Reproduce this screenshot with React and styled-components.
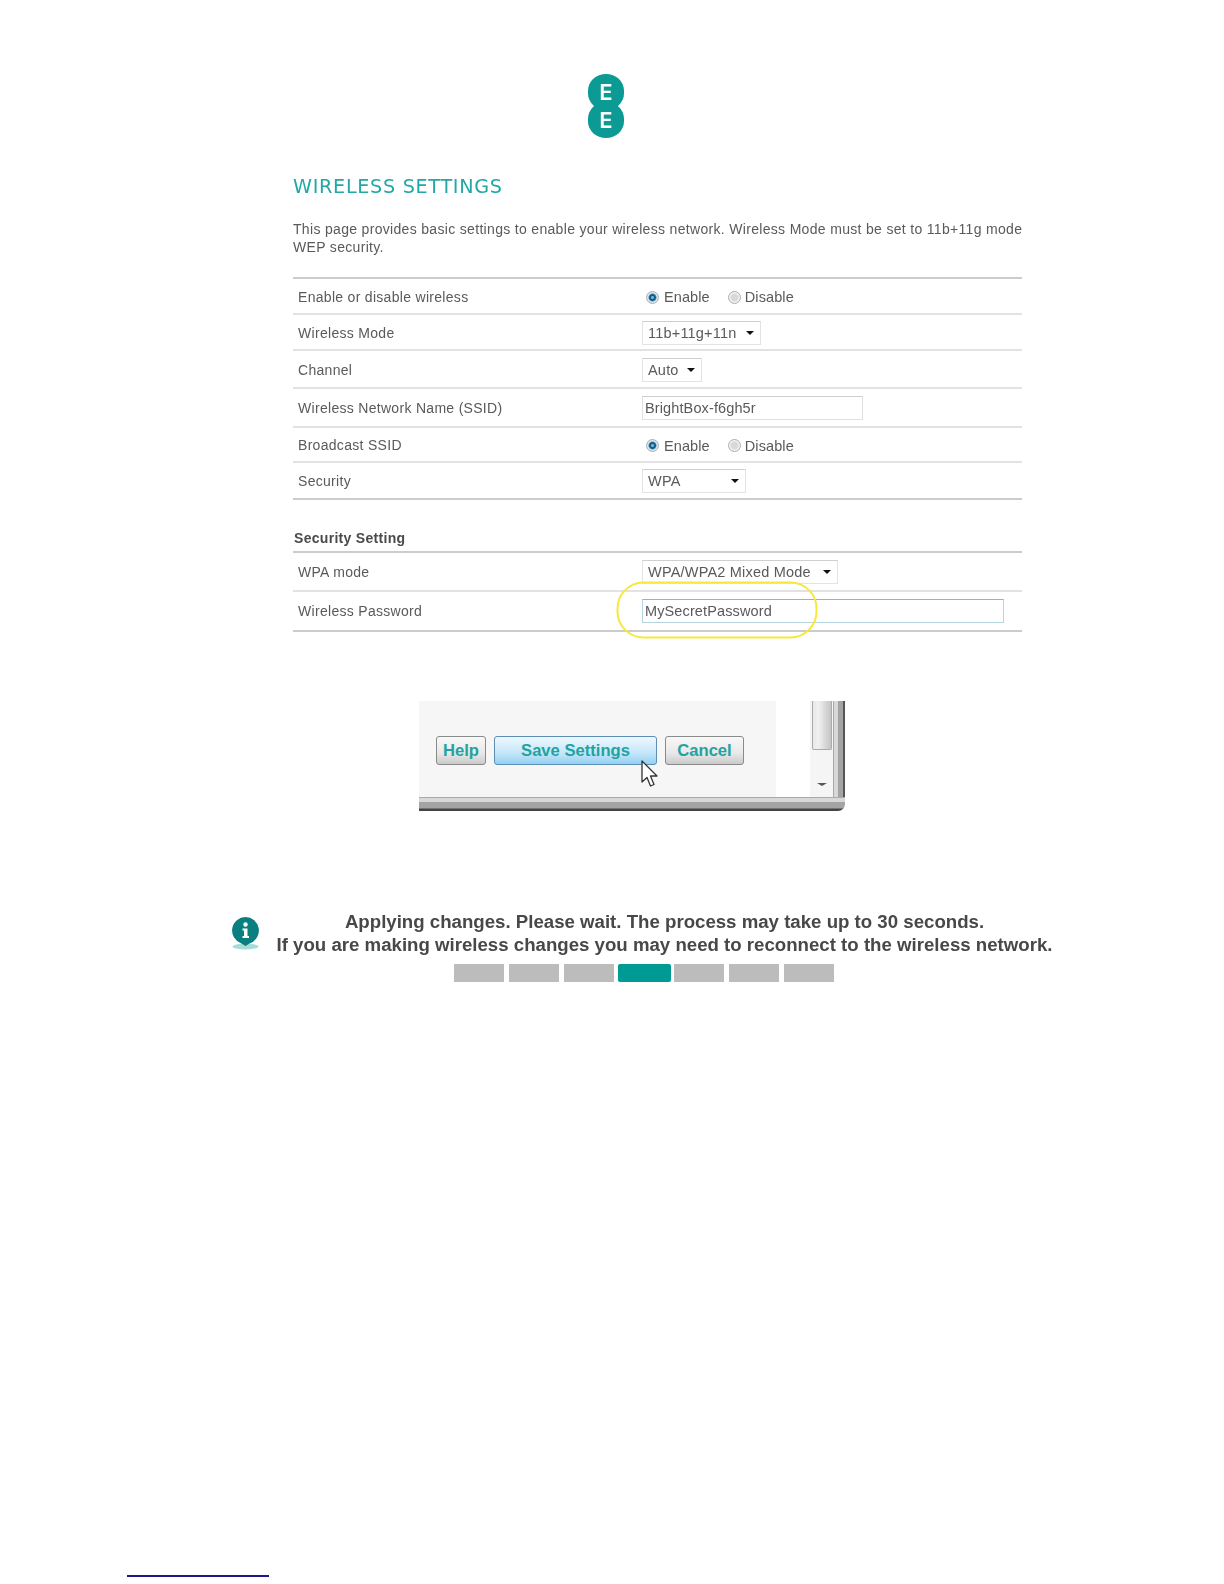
import React from "react";
import styled, { createGlobalStyle } from "styled-components";

const GlobalStyle = createGlobalStyle`
  html, body {
    margin: 0;
    padding: 0;
    background: #fff;
    font-family: "Liberation Sans", Arial, sans-serif;
  }
`;

const Page = styled.div`
  width: 1224px;
  height: 1584px;
  padding-top: 74px;
  box-sizing: border-box;
  overflow: hidden;
  filter: blur(0.35px);
`;

const Logo = styled.div`
  width: 37px;
  height: 64px;
  margin-left: 588px;
`;

const LogoBlob = styled.div`
  width: 36px;
  height: 36px;
  margin-top: ${(p) => (p.$lower ? "-8px" : "0")};
  border-radius: 50% / 46%;
  background: #0b9a94;
  color: #fff;
  font: 600 22px/37px Inter, sans-serif;
  text-align: center;
`;

const Settings = styled.div`
  width: 729px;
  margin-left: 293px;
`;

const Heading = styled.h1`
  margin: 37px 0 0;
  font: 400 19.2px/24px "DejaVu Sans", sans-serif;
  letter-spacing: 0.7px;
  color: #22a8a6;
  white-space: nowrap;
`;

const Intro = styled.p`
  margin: 21px 0 0;
  font-size: 14px;
  line-height: 18px;
  letter-spacing: 0.32px;
  color: #5a5a5a;
  white-space: nowrap;
`;

const Table = styled.div`
  margin-top: ${(p) => p.$top || 0}px;
  border-top: 2px solid #ccc;
`;

const Row = styled.div`
  display: grid;
  grid-template-columns: 349px 1fr;
  align-items: center;
  height: ${(p) => p.$h}px;
  box-sizing: border-box;
  padding-top: ${(p) => (p.$nudge ? 1 : 0)}px;
  border-bottom: 2px solid ${(p) => (p.$last ? "#ccc" : "#e2e2e2")};
  position: relative;
`;

const Label = styled.div`
  padding-left: 5px;
  font-size: 14px;
  letter-spacing: 0.3px;
  color: #5a5a5a;
`;

const Control = styled.div`
  display: flex;
  align-items: center;
`;

const RadioControl = styled(Control)`
  padding-top: 1px;
`;

const RadioDot = styled.span`
  width: 13px;
  height: 13px;
  margin-left: ${(p) => (p.$first ? "4px" : "18px")};
  margin-right: ${(p) => (p.$first ? 5 : 4)}px;
  box-sizing: border-box;
  border-radius: 50%;
  border: 1px solid #a4aeb4;
  background: ${(p) =>
    p.$on
      ? "radial-gradient(circle, #7fb0d0 0 1px, #0f5f8c 2px 3px, #dbe6ee 4.5px)"
      : "radial-gradient(circle, #d8d8d8 0 3px, #f3f3f3 5px)"};
`;

const RadioText = styled.span`
  font-size: 14.5px;
  letter-spacing: 0.1px;
  color: #5a5a5a;
`;

const SelectBox = styled.div`
  display: flex;
  align-items: center;
  justify-content: space-between;
  width: ${(p) => p.$w}px;
  height: 24px;
  box-sizing: border-box;
  padding: 0 6px 0 5px;
  border: 1px solid #e3e3e3;
  border-top-color: #cfcfcf;
  font-size: 14.5px;
  letter-spacing: 0.2px;
  color: #5a5a5a;
`;

const SelectArrow = styled.span`
  width: 0;
  height: 0;
  border-left: 4px solid transparent;
  border-right: 4px solid transparent;
  border-top: 4px solid #111;
`;

const TextBox = styled.div`
  width: ${(p) => p.$w}px;
  height: 24px;
  box-sizing: border-box;
  padding-left: 2px;
  border: 1px solid ${(p) => (p.$focus ? "#b5d5e0" : "#e0e0e0")};
  border-top-color: ${(p) => (p.$focus ? "#8fb6c8" : "#cfcfcf")};
  font-size: 14.5px;
  letter-spacing: 0.12px;
  line-height: 22px;
  color: #5a5a5a;
`;

const SubHeading = styled.h2`
  margin: 27px 0 2px;
  padding-left: 1px;
  font-size: 14px;
  font-weight: 700;
  line-height: 22px;
  letter-spacing: 0.3px;
  color: #4a4a4a;
`;

const Highlight = styled.svg`
  position: absolute;
  left: 323px;
  top: -11px;
`;

const ShotWindow = styled.div`
  display: flex;
  flex-direction: column;
  width: 426px;
  height: 110px;
  margin: 69px 0 0 419px;
  border-bottom-right-radius: 7px;
  overflow: hidden;
  position: relative;
`;

const ShotBody = styled.div`
  display: flex;
  flex: 1;
`;

const ButtonPanel = styled.div`
  display: flex;
  align-items: flex-start;
  gap: 8px;
  width: 357px;
  padding: 35px 0 0 17px;
  box-sizing: border-box;
  background: #f6f6f6;
`;

const ShotButton = styled.div`
  width: ${(p) => p.$w}px;
  height: 29px;
  box-sizing: border-box;
  border: 1px solid ${(p) => (p.$primary ? "#5d8fb5" : "#8a8a8a")};
  border-radius: 3px;
  background: ${(p) =>
    p.$primary
      ? "linear-gradient(#eef8fe, #c4e6f9 60%, #93d0f2)"
      : "linear-gradient(#f8f8f8, #e8e8e8 60%, #cacaca)"};
  color: #22a3a0;
  font-size: 16.6px;
  font-weight: 700;
  line-height: 27px;
  text-align: center;
`;

const Scrollbar = styled.div`
  display: flex;
  flex-direction: column;
  align-items: center;
  width: 23px;
  margin-left: 34px;
  background: #f5f5f5;
`;

const ScrollThumb = styled.div`
  width: 20px;
  height: 49px;
  box-sizing: border-box;
  border: 1px solid #aaa;
  border-top: 0;
  border-radius: 0 0 2px 2px;
  background: linear-gradient(90deg, #e8e8e8, #f0f0f0 30%, #c4c4c4);
`;

const ScrollArrow = styled.span`
  width: 0;
  height: 0;
  margin-top: 33px;
  border-left: 5px solid transparent;
  border-right: 5px solid transparent;
  border-top: 3px solid #555;
`;

const FrameRight = styled.div`
  width: 12px;
  background: linear-gradient(90deg, #aaa 0 1px, #d8d8d8 1px 5px, #a4a4a4 5px 10px, #555 10px 12px);
`;

const FrameBottom = styled.div`
  height: 14px;
  background: linear-gradient(#aaa 0 1px, #d8d8d8 1px 5px, #a4a4a4 5px 11px, #444 12px 14px);
`;

const Cursor = styled.svg`
  position: absolute;
  left: 222px;
  top: 59px;
`;

const Notice = styled.div`
  display: flex;
  margin: 99px 0 0 232px;
`;

const InfoIcon = styled.svg`
  margin-top: 7px;
`;

const NoticeText = styled.div`
  width: 777px;
  margin-left: 17px;
  font-size: 18.65px;
  font-weight: 700;
  line-height: 23px;
  text-align: center;
  color: #484848;
  white-space: nowrap;
`;

const Progress = styled.div`
  display: flex;
  gap: 5px;
  margin: 8px 0 0 454px;
`;

const Segment = styled.div`
  width: ${(p) => (p.$on ? 53 : 50)}px;
  height: 18px;
  margin: 0 ${(p) => (p.$on ? -1.5 : 0)}px;
  background: ${(p) => (p.$on ? "#009a95" : "#bcbcbc")};
  border-radius: ${(p) => (p.$on ? 2 : 0)}px;
`;

const FootnoteRule = styled.div`
  width: 142px;
  height: 1.5px;
  margin: 593px 0 0 127px;
  background: #1a1a8c;
`;

const RadioPair = () => (
  <RadioControl>
    <RadioDot $first $on />
    <RadioText>Enable</RadioText>
    <RadioDot />
    <RadioText>Disable</RadioText>
  </RadioControl>
);

const Select = ({ w, children }) => (
  <SelectBox $w={w}>
    {children}
    <SelectArrow />
  </SelectBox>
);

export default function App() {
  return (
    <Page>
      <GlobalStyle />
      <Logo>
        <LogoBlob>E</LogoBlob>
        <LogoBlob $lower>E</LogoBlob>
      </Logo>
      <Settings>
        <Heading>WIRELESS SETTINGS</Heading>
        <Intro>
          This page provides basic settings to enable your wireless network. Wireless Mode must be set to 11b+11g mode
          <br />
          WEP security.
        </Intro>
        <Table $top={21}>
          <Row $h={36} $nudge>
            <Label>Enable or disable wireless</Label>
            <RadioPair />
          </Row>
          <Row $h={36} $nudge>
            <Label>Wireless Mode</Label>
            <Control><Select w={119}>11b+11g+11n</Select></Control>
          </Row>
          <Row $h={38} $nudge>
            <Label>Channel</Label>
            <Control><Select w={60}>Auto</Select></Control>
          </Row>
          <Row $h={39} $nudge>
            <Label>Wireless Network Name (SSID)</Label>
            <Control><TextBox $w={221}>BrightBox-f6gh5r</TextBox></Control>
          </Row>
          <Row $h={35} $nudge>
            <Label>Broadcast SSID</Label>
            <RadioPair />
          </Row>
          <Row $h={37} $last>
            <Label>Security</Label>
            <Control><Select w={104}>WPA</Select></Control>
          </Row>
        </Table>
        <SubHeading>Security Setting</SubHeading>
        <Table>
          <Row $h={39} $nudge>
            <Label>WPA mode</Label>
            <Control><Select w={196}>WPA/WPA2 Mixed Mode</Select></Control>
          </Row>
          <Row $h={40} $last>
            <Label>Wireless Password</Label>
            <Control><TextBox $w={362} $focus>MySecretPassword</TextBox></Control>
            <Highlight width="204" height="58" viewBox="0 0 204 58">
              <rect x="1.5" y="1.5" width="199" height="55" rx="26" fill="none" stroke="#f6e93c" strokeWidth="2" />
            </Highlight>
          </Row>
        </Table>
      </Settings>
      <ShotWindow>
        <ShotBody>
          <ButtonPanel>
            <ShotButton $w={50}>Help</ShotButton>
            <ShotButton $w={163} $primary>Save Settings</ShotButton>
            <ShotButton $w={79}>Cancel</ShotButton>
          </ButtonPanel>
          <Scrollbar>
            <ScrollThumb />
            <ScrollArrow />
          </Scrollbar>
          <FrameRight />
        </ShotBody>
        <FrameBottom />
        <Cursor width="18" height="28" viewBox="0 0 18 28">
          <path d="M1 1 L1 22 L6 17.5 L9.5 26 L13 24.5 L9.5 16 L16 16 Z" fill="#fff" stroke="#333" strokeWidth="1.3" strokeLinejoin="round" />
        </Cursor>
      </ShotWindow>
      <Notice>
        <InfoIcon width="27" height="33" viewBox="0 0 27 33">
          <ellipse cx="13.5" cy="29.5" rx="13" ry="3" fill="#a9dcd9" />
          <path d="M13.5 0 A13.5 13.5 0 0 1 18 26.2 L13.5 29 L9 26.2 A13.5 13.5 0 0 1 13.5 0 Z" fill="#0a7f80" />
          <circle cx="13.5" cy="7.5" r="2.2" fill="#fff" />
          <path d="M10.5 11.5 H15.5 V19 H17 V21 H10.5 V19 H12 V13.5 H10.5 Z" fill="#fff" />
        </InfoIcon>
        <NoticeText>
          Applying changes. Please wait. The process may take up to 30 seconds.
          <br />
          If you are making wireless changes you may need to reconnect to the wireless network.
        </NoticeText>
      </Notice>
      <Progress>
        {[0, 1, 2, 3, 4, 5, 6].map((i) => (
          <Segment key={i} $on={i === 3} />
        ))}
      </Progress>
      <FootnoteRule />
    </Page>
  );
}
